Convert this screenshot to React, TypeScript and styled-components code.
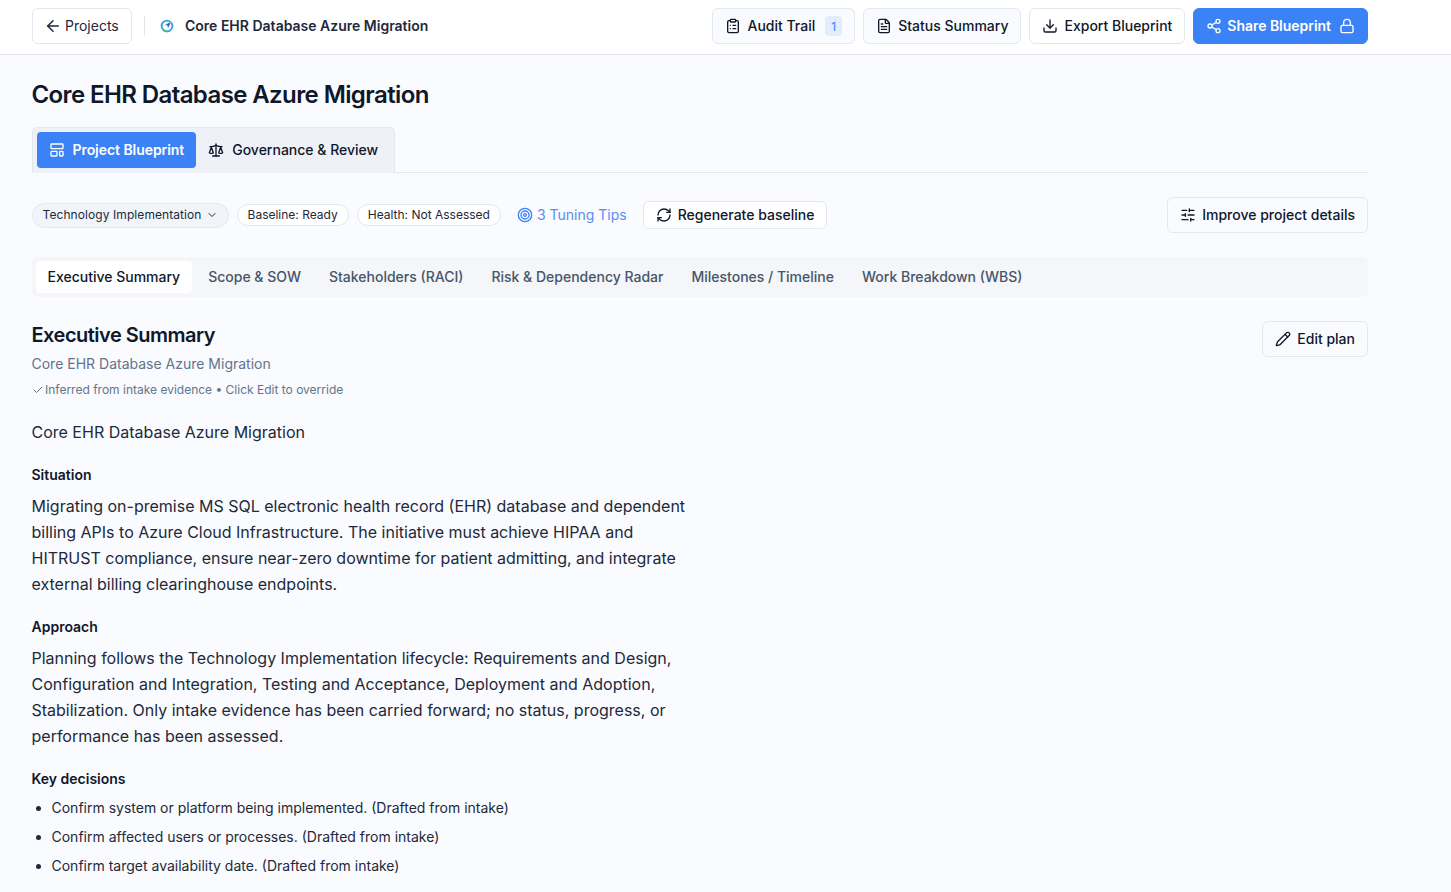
import React from "react";
import styled, { createGlobalStyle } from "styled-components";
import {
  ArrowLeft,
  ChevronDown,
  Check,
  ClipboardList,
  Download,
  FileText,
  LayoutTemplate,
  Lock,
  Pencil,
  RefreshCw,
  Scale,
  Share2,
  SlidersHorizontal,
  Target,
} from "lucide-react";

const GlobalStyle = createGlobalStyle`
  * { box-sizing: border-box; }
  html, body { margin: 0; padding: 0; height: 892px; overflow: hidden; }
  body {
    font-family: Inter, "Liberation Sans", sans-serif;
    background: #f9fbfe;
    color: #0f172a;
  }
`;

const Header = styled.header`
  display: flex;
  align-items: flex-start;
  justify-content: space-between;
  height: 55px;
  padding: 8px 83px 0 32px;
  background: #ffffff;
  border-bottom: 1px solid #e2e5ea;
`;

const HeaderLeft = styled.div`
  display: flex;
  align-items: center;
  height: 36px;
`;

const HeaderRight = styled.div`
  display: flex;
  align-items: center;
  gap: 8px;
`;

const Button = styled.button<{ $tint?: boolean }>`
  display: inline-flex;
  align-items: center;
  gap: 6px;
  height: 36px;
  padding: 0 12px;
  border: 1px solid #e2e8f0;
  border-radius: 6px;
  background: ${(p) => (p.$tint ? "#f9fbfe" : "#ffffff")};
  color: #0f172a;
  font-family: inherit;
  font-size: 14px;
  font-weight: 500;
  white-space: nowrap;
`;

// flex centring leaves the Inter text a pixel low against its icon
const Text = styled.span`
  margin-bottom: 2px;
`;

const BackButton = styled(Button)`
  width: 100px;
  padding: 0 12px 0 11px;
  gap: 3px;
  color: #1e293b;
  font-weight: 400;
`;

const ShareButton = styled(Button)`
  background: #3b82f6;
  border-color: #3b82f6;
  color: #ffffff;
  font-weight: 600;
  gap: 5px;
  letter-spacing: -0.03px;
`;

const LockWrap = styled.span`
  display: inline-flex;
  margin-left: 3px;
`;

const Divider = styled.span`
  width: 1px;
  height: 20px;
  background: #e2e5ea;
  margin: 0 14px 0 12px;
`;

const Mark = styled.svg`
  width: 16px;
  height: 16px;
  margin-right: 10px;
`;

const HeaderTitle = styled.span`
  margin-bottom: 2px;
  font-size: 14px;
  font-weight: 600;
  color: #1e293b;
`;

const AuditCount = styled.span`
  display: inline-flex;
  align-items: center;
  justify-content: center;
  width: 17px;
  height: 20px;
  margin-left: 4px;
  border-radius: 4px;
  background: #e3ecfb;
  color: #3b82f6;
  font-size: 12px;
  font-weight: 400;
`;

const Main = styled.main`
  padding: 0 83px 0 31.5px;
`;

const PageTitle = styled.h1`
  margin: 0;
  padding-top: 23px;
  height: 72px;
  font-size: 24px;
  line-height: 34px;
  font-weight: 600;
  letter-spacing: -0.6px;
  color: #0f172a;
`;

const ViewTabsRow = styled.div`
  border-bottom: 1px solid #e2e8f0;
  height: 46px;
`;

const ViewTabs = styled.div`
  display: inline-flex;
  height: 46px;
  padding: 4px;
  background: #eef2f8;
  border: 1px solid #e2e8f0;
  border-bottom: none;
  border-radius: 6px 6px 0 0;
`;

const ViewTab = styled.div<{ $active?: boolean }>`
  display: flex;
  align-items: center;
  gap: 8px;
  height: 36px;
  padding: 0 12px;
  border-radius: 4px;
  font-size: 14px;
  font-weight: ${(p) => (p.$active ? 600 : 500)};
  letter-spacing: ${(p) => (p.$active ? "-0.06px" : "0")};
  background: ${(p) => (p.$active ? "#3b82f6" : "transparent")};
  color: ${(p) => (p.$active ? "#ffffff" : "#0f172a")};
`;

const MetaRow = styled.div`
  display: flex;
  align-items: center;
  justify-content: space-between;
  margin-top: 24px;
  height: 36px;
`;

const MetaLeft = styled.div`
  display: flex;
  align-items: center;
  gap: 8px;
`;

const Pill = styled.span<{ $select?: boolean }>`
  display: inline-flex;
  align-items: center;
  gap: 4px;
  height: ${(p) => (p.$select ? "25px" : "22px")};
  padding: 0 10px;
  border: 1px solid #e2e8f0;
  border-radius: 999px;
  background: ${(p) => (p.$select ? "#f1f5f9" : "#ffffff")};
  color: #1e293b;
  font-size: 12px;
  font-weight: 400;
  letter-spacing: ${(p) => (p.$select ? "0.08px" : "0")};
  white-space: nowrap;
`;

const Tips = styled.span`
  display: inline-flex;
  align-items: center;
  gap: 4px;
  margin-left: 8px;
  margin-right: 8px;
  color: #5b8def;
  font-size: 14px;
  svg {
    color: #3b82f6;
  }
`;

const RegenButton = styled(Button)`
  height: 28px;
`;

const SectionTabs = styled.nav`
  display: flex;
  align-items: center;
  gap: 4px;
  height: 40px;
  margin-top: 24px;
  padding: 0 4px;
  border-radius: 6px;
  background: #f4f6f9;
`;

const SectionTab = styled.div<{ $active?: boolean }>`
  display: flex;
  align-items: center;
  height: 32px;
  padding: 0 12px;
  border-radius: 4px;
  font-size: 14px;
  font-weight: 500;
  background: ${(p) => (p.$active ? "#ffffff" : "transparent")};
  color: ${(p) => (p.$active ? "#0f172a" : "#475569")};
`;

const SectionHead = styled.div`
  display: flex;
  align-items: flex-start;
  justify-content: space-between;
  margin-top: 24px;
`;

const SectionTitle = styled.h2`
  margin: 0;
  font-size: 20px;
  line-height: 28px;
  font-weight: 600;
  letter-spacing: -0.5px;
  color: #0f172a;
`;

const SectionSub = styled.div`
  margin-top: 5px;
  font-size: 14px;
  line-height: 20px;
  color: #64748b;
`;

const Inferred = styled.div`
  display: flex;
  align-items: center;
  gap: 1.5px;
  margin-top: 6px;
  font-size: 12px;
  line-height: 20px;
  color: #64748b;
`;

const Body = styled.div`
  width: 664px;
`;

const PlanName = styled.p`
  margin: 20px 0 0;
  font-size: 16px;
  line-height: 24px;
  color: #1e293b;
`;

const Label = styled.h3<{ $first?: boolean }>`
  margin: ${(p) => (p.$first ? "21px" : "20px")} 0 0;
  font-size: 14px;
  line-height: 20px;
  font-weight: 600;
  color: #0f172a;
`;

const Paragraph = styled.p`
  margin: 8px 0 0;
  font-size: 16px;
  line-height: 26px;
  color: #1e293b;
`;

const Decisions = styled.ul`
  margin: 8px 0 0;
  padding: 0 0 0 20px;
`;

const Decision = styled.li`
  font-size: 14px;
  line-height: 21px;
  margin-bottom: 8px;
  color: #1e293b;
`;

const sectionTabs = [
  "Executive Summary",
  "Scope & SOW",
  "Stakeholders (RACI)",
  "Risk & Dependency Radar",
  "Milestones / Timeline",
  "Work Breakdown (WBS)",
];

const decisions = [
  "Confirm system or platform being implemented. (Drafted from intake)",
  "Confirm affected users or processes. (Drafted from intake)",
  "Confirm target availability date. (Drafted from intake)",
];

export default function App() {
  return (
    <>
      <GlobalStyle />
      <Header>
        <HeaderLeft>
          <BackButton>
            <ArrowLeft size={18} />
            <Text>Projects</Text>
          </BackButton>
          <Divider />
          <Mark viewBox="0 0 16 16" fill="none">
            <circle cx="8" cy="8" r="5.4" stroke="#3f9bd8" strokeWidth="1.8" />
            <path d="M3.6 11a5.4 5.4 0 0 0 4.4 2.4" stroke="#3cc48f" strokeWidth="1.8" />
            <path d="M12.8 3 5.6 7l2.7.8.9 2.7z" fill="#1d6fb8" stroke="#fff" strokeWidth="0.5" />
          </Mark>
          <HeaderTitle>Core EHR Database Azure Migration</HeaderTitle>
        </HeaderLeft>
        <HeaderRight>
          <Button $tint>
            <ClipboardList size={16} />
            <Text>Audit Trail</Text>
            <AuditCount>1</AuditCount>
          </Button>
          <Button $tint>
            <FileText size={16} />
            <Text>Status Summary</Text>
          </Button>
          <Button>
            <Download size={16} />
            <Text>Export Blueprint</Text>
          </Button>
          <ShareButton>
            <Share2 size={16} />
            <Text>Share Blueprint</Text>
            <LockWrap>
              <Lock size={16} />
            </LockWrap>
          </ShareButton>
        </HeaderRight>
      </Header>
      <Main>
        <PageTitle>Core EHR Database Azure Migration</PageTitle>
        <ViewTabsRow>
          <ViewTabs>
            <ViewTab $active>
              <LayoutTemplate size={16} />
              <Text>Project Blueprint</Text>
            </ViewTab>
            <ViewTab>
              <Scale size={16} />
              <Text>Governance &amp; Review</Text>
            </ViewTab>
          </ViewTabs>
        </ViewTabsRow>
        <MetaRow>
          <MetaLeft>
            <Pill $select>
              <Text>Technology Implementation</Text>
              <ChevronDown size={12} />
            </Pill>
            <Pill>
              <Text>Baseline: Ready</Text>
            </Pill>
            <Pill>
              <Text>Health: Not Assessed</Text>
            </Pill>
            <Tips>
              <Target size={16} />
              <Text>3 Tuning Tips</Text>
            </Tips>
            <RegenButton>
              <RefreshCw size={16} />
              <Text>Regenerate baseline</Text>
            </RegenButton>
          </MetaLeft>
          <Button $tint>
            <SlidersHorizontal size={16} />
            <Text>Improve project details</Text>
          </Button>
        </MetaRow>
        <SectionTabs>
          {sectionTabs.map((tab, i) => (
            <SectionTab key={tab} $active={i === 0}>
              <Text>{tab}</Text>
            </SectionTab>
          ))}
        </SectionTabs>
        <SectionHead>
          <div>
            <SectionTitle>Executive Summary</SectionTitle>
            <SectionSub>Core EHR Database Azure Migration</SectionSub>
            <Inferred>
              <Check size={12} />
              Inferred from intake evidence • Click Edit to override
            </Inferred>
          </div>
          <Button $tint>
            <Pencil size={16} />
            <Text>Edit plan</Text>
          </Button>
        </SectionHead>
        <Body>
          <PlanName>Core EHR Database Azure Migration</PlanName>
          <Label $first>Situation</Label>
          <Paragraph>
            Migrating on-premise MS SQL electronic health record (EHR) database and dependent
            billing APIs to Azure Cloud Infrastructure. The initiative must achieve HIPAA and
            HITRUST compliance, ensure near-zero downtime for patient admitting, and integrate
            external billing clearinghouse endpoints.
          </Paragraph>
          <Label>Approach</Label>
          <Paragraph>
            Planning follows the Technology Implementation lifecycle: Requirements and Design,
            Configuration and Integration, Testing and Acceptance, Deployment and Adoption,
            Stabilization. Only intake evidence has been carried forward; no status, progress, or
            performance has been assessed.
          </Paragraph>
          <Label>Key decisions</Label>
          <Decisions>
            {decisions.map((d) => (
              <Decision key={d}>{d}</Decision>
            ))}
          </Decisions>
        </Body>
      </Main>
    </>
  );
}
